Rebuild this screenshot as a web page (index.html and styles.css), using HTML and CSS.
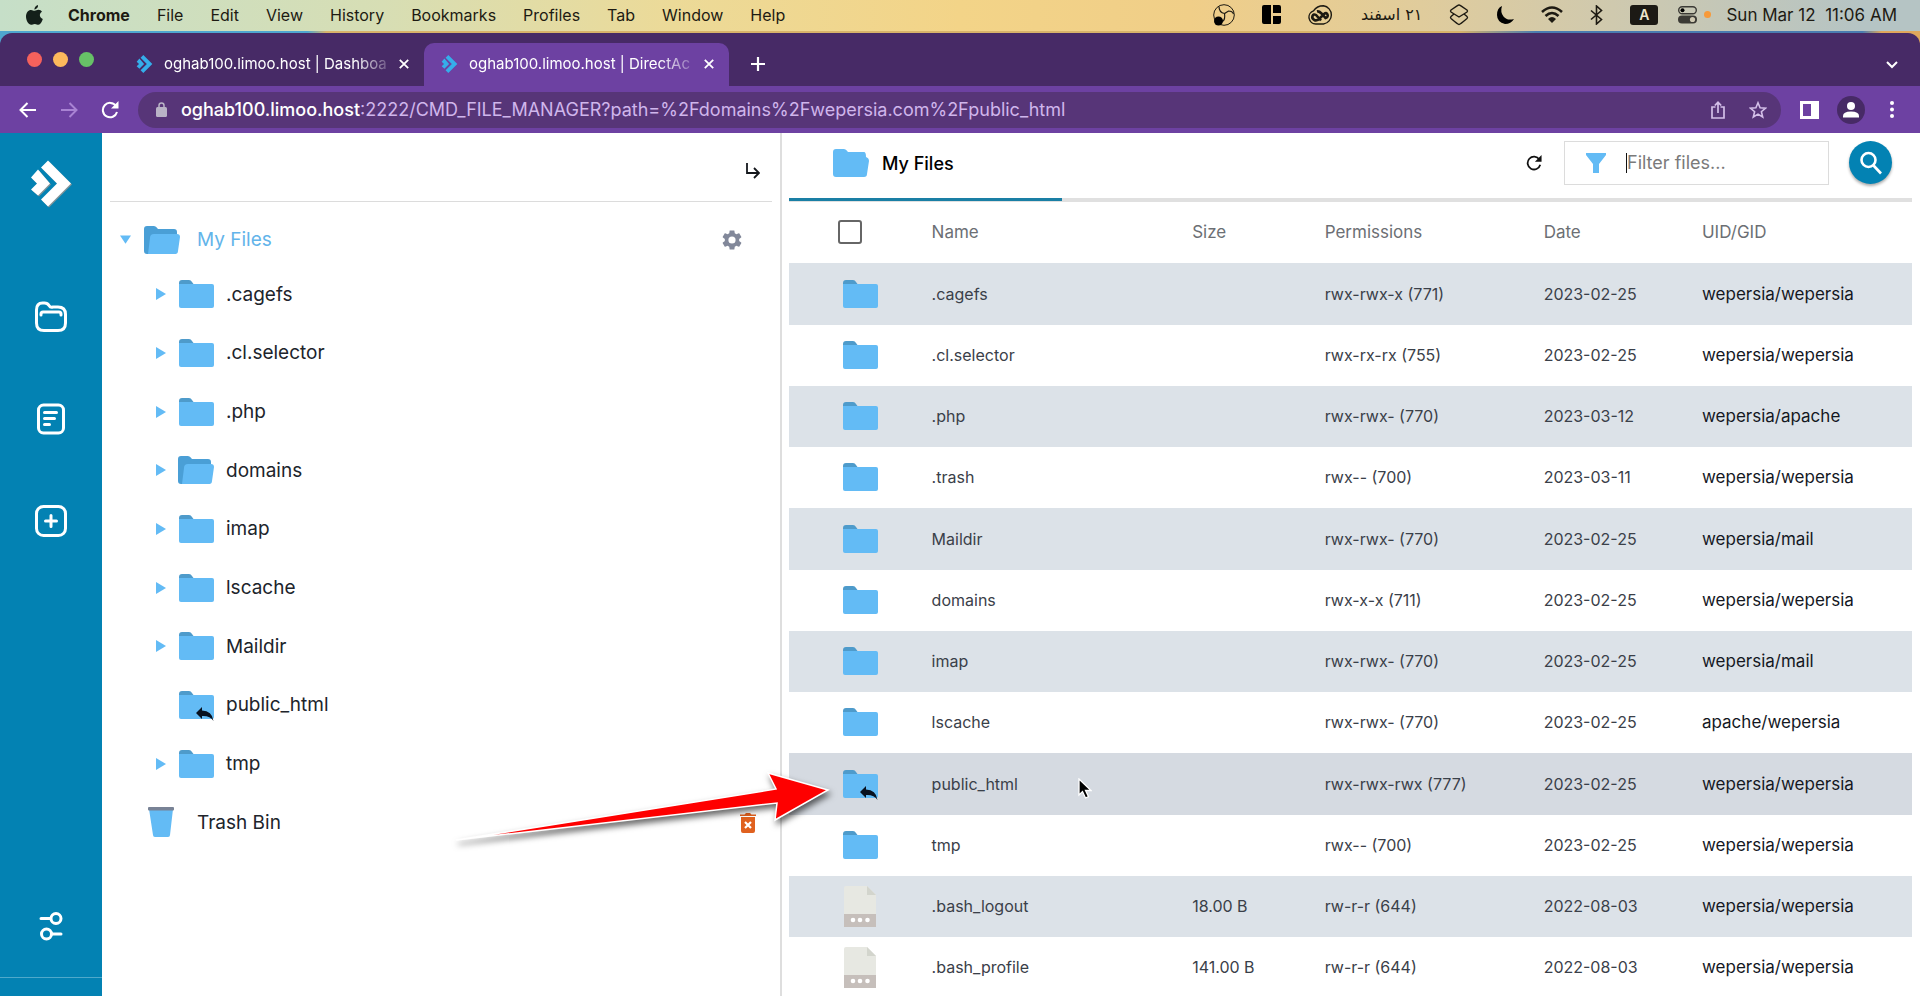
FILE: index.html
```html
<!DOCTYPE html>
<html lang="en">
<head>
<meta charset="utf-8">
<title>oghab100.limoo.host | DirectAdmin</title>
<link rel="stylesheet" href="styles.css">
</head>
<body>
<svg class="sprite" aria-hidden="true">
  <symbol id="folder" viewBox="0 0 36 28"><path d="M1 10V3q0-3 3-3h7q2 0 3 2l3 4v5z" fill="#4e9bcb"/><path d="M1 4h33q2 0 2 2v20q0 2-2 2H3q-2 0-2-2z" fill="#63bbf5"/></symbol>
  <symbol id="folder-open" viewBox="0 0 36 28"><path d="M0 25V3q0-3 3-3h7q2 0 4 3h16q3 0 3 3v19q0 3-3 3H3q-3 0-3-3z" fill="#4a9fd6"/><path d="M6 12q0-4 4-4h23q3 0 3 3l-2 14q0 3-3 3H4z" fill="#63bbf5"/></symbol>
  <symbol id="folder-plain" viewBox="0 0 36 28"><path d="M0 25V3q0-3 3-3h8q2 0 4 3h16q2 0 2 5 3 1 3 4l-2 13q0 3-3 3H3q-3 0-3-3z" fill="#63bbf5"/></symbol>
  <symbol id="link" viewBox="0 0 18 14"><path d="M0 6L6 0V3.500Q16 3.500 17.500 14Q14 8.500 6 9V12z" fill="#08111f"/></symbol>
  <symbol id="right" viewBox="0 0 10 12"><path d="M0 0l10 6-10 6z" fill="#63bbf5"/></symbol>
  <symbol id="doc" viewBox="0 0 32 41"><path d="M0 2q0-2 2-2h21l9 9v20H0z" fill="#e7e8e2"/><path d="M23 0v9h9z" fill="#d3d5cd"/><path d="M0 28h32v13H0z" fill="#c6bfbb"/><g fill="#fff"><circle cx="9" cy="34" r="2.300"/><circle cx="16" cy="34" r="2.300"/><circle cx="23.500" cy="34" r="2.300"/></g></symbol>
  <symbol id="brand" viewBox="0 0 40 46"><path d="M17 0L40 23 17 46 10 39 26 23 10 7z"/><path d="M7 9l12 14L7 35 0 29l6-6-6-6z"/></symbol>
  <symbol id="close" viewBox="0 0 10 10"><path d="M.8.8l8.400 8.400M9.200.8L.8 9.200" stroke="#fff" stroke-width="1.800"/></symbol>
  <symbol id="reload" viewBox="0 0 18 18"><path d="M15 5A7.200 7.200 0 1 0 16 11" fill="none" stroke="currentColor" stroke-width="2"/><path d="M17.500 0v7.500H10z" fill="currentColor"/></symbol>
</svg>

<header class="menubar">
  <nav class="menus">
    <svg class="apple" viewBox="0 0 17 20"><path d="M12 0q.5 3-3.500 4.800Q8 1.500 12 0zM8.500 5.800c1.500 0 2.200-1 4-1 1.500 0 2.800.8 3.500 2-3.200 2-2.700 5.800.8 7.200C15.800 17 14.300 19.800 12.500 19.800c-1.500 0-2-.9-3.700-.9s-2.400.9-3.700.9C2.600 19.800 0 15.500 0 11.500s2.400-6.600 5-6.600c1.500 0 2.500.9 3.500.9z"/></svg>
    <strong>Chrome</strong><span>File</span><span>Edit</span><span>View</span><span>History</span><span>Bookmarks</span><span>Profiles</span><span>Tab</span><span>Window</span><span>Help</span>
  </nav>
  <div class="status">
    <svg width="22" height="22" viewBox="0 0 22 22"><circle cx="11" cy="11" r="10.300" fill="none" stroke="#1d1a12" stroke-width="1"/><path d="M6 2.500q0 6 5.500 7l4-2.500q4 0 5 3M11.500 9.500q1 6-2 8" fill="none" stroke="#1d1a12" stroke-width="1.200"/><circle cx="5.500" cy="17" r="4.500"/></svg>
    <svg width="19" height="19" viewBox="0 0 19 19"><path d="M2 0h7v19H2q-2 0-2-2V2q0-2 2-2zM11 0h6q2 0 2 2v6h-8zM11 11h8v6q0 2-2 2h-6z"/></svg>
    <svg width="26" height="20" viewBox="0 0 26 20"><path d="M8 19A6.800 6.800 0 0 1 5.500 5.800Q9 .8 15.500.8a9.200 9.200 0 0 1 0 18.200z" fill="none" stroke="#1d1a12" stroke-width="1.400"/><path d="M13 15.500l-5-5.500q-2.500-1.500-3.500 1t2 4.200q3 1 5.500-2.200l4-4q2.500-2 3.500.5t-2 3.500l-4-4.500q-2.500-2.500-4.500-2" fill="none" stroke="#1d1a12" stroke-width="2.600"/></svg>
    <span class="fa" lang="fa" dir="rtl">۲۱ اسفند</span>
    <svg width="20" height="22" viewBox="0 0 20 22" fill="none" stroke="#1d1a12" stroke-width="1.400"><path d="M10 1Q11 1 18 6q1 1 0 2l-8 5-8-5q-1-1 0-2 7-5 8-5z"/><path d="M5 10l-3 2.500q-1 1 0 2 7 6 8 6t8-6q1-1 0-2L15 10"/></svg>
    <svg width="18" height="18" viewBox="0 0 18 18"><path d="M6 0Q1 2 1 9t8 9q6 0 9-5-7 2-10.500-2.500T6 0z"/></svg>
    <svg width="22" height="17" viewBox="0 0 22 17" fill="none" stroke="#1d1a12" stroke-width="2.600"><path d="M1 6q10-9 20 0M4.500 10q6.500-6 13 0"/><path d="M7 13q4-4 8 0l-4 4z" fill="#1d1a12" stroke="none"/></svg>
    <svg width="13" height="20" viewBox="0 0 13 20" fill="none" stroke="#1d1a12" stroke-width="1.600"><path d="M1 5.500l10.500 9L6.500 19V1l5 4.500L1 14.500"/></svg>
    <span class="lang">A</span>
    <svg class="toggles" width="19" height="18" viewBox="0 0 19 18"><rect x=".7" y=".7" width="17.600" height="7" rx="3.500" fill="none" stroke="#3b3a35" stroke-width="1.400"/><circle cx="4.500" cy="4.200" r="2"/><rect y="9.500" width="19" height="8" rx="4" fill="#3b3a35"/><circle cx="14.500" cy="13.500" r="2.600" fill="#cfc9b2"/></svg>
    <i class="dot"></i>
    <time>Sun Mar 12&nbsp; 11:06 AM</time>
  </div>
</header>

<div class="window">
  <div class="tabs">
    <div class="lights"><i class="red"></i><i class="amber"></i><i class="green"></i></div>
    <div class="tab"><svg class="fav"><use href="#brand"/></svg><span class="title">oghab100.limoo.host | Dashboa</span><button aria-label="Close tab"><svg class="x"><use href="#close"/></svg></button></div>
    <div class="tab active"><svg class="fav"><use href="#brand"/></svg><span class="title">oghab100.limoo.host | DirectAc</span><button aria-label="Close tab"><svg class="x"><use href="#close"/></svg></button></div>
    <button class="plus" aria-label="New tab"><svg width="14" height="14" viewBox="0 0 14 14"><path d="M7 0v14M0 7h14" stroke="#fff" stroke-width="2.200"/></svg></button>
    <button class="more" aria-label="Search tabs"><svg width="12" height="8" viewBox="0 0 12 8"><path d="M1 1l5 5 5-5" fill="none" stroke="#fff" stroke-width="2"/></svg></button>
  </div>
  <div class="toolbar">
    <button aria-label="Back"><svg width="18" height="16" viewBox="0 0 18 16" fill="none" stroke="#fff" stroke-width="2"><path d="M17 8H2M8.500 1L1.500 8l7 7"/></svg></button>
    <button aria-label="Forward"><svg width="18" height="16" viewBox="0 0 18 16" fill="none" stroke="#a983d3" stroke-width="2"><path d="M1 8h15M9.500 1l7 7-7 7"/></svg></button>
    <button class="white" aria-label="Reload"><svg width="18" height="18"><use href="#reload"/></svg></button>
    <div class="omnibox">
      <svg width="11" height="15" viewBox="0 0 11 15"><path d="M3 7V3.500q0-2.500 2.500-2.500T8 3.500V7" fill="none" stroke="#b9b3c6" stroke-width="1.500"/><rect y="5" width="11" height="10" rx="1.500" fill="#b9b3c6"/></svg>
      <span class="url"><b>oghab100.limoo.host</b>:2222/CMD_FILE_MANAGER?path=%2Fdomains%2Fwepersia.com%2Fpublic_html</span>
      <button aria-label="Share"><svg width="14" height="18" viewBox="0 0 14 18" fill="none" stroke="#d3bfe8" stroke-width="1.700"><path d="M4.500 6H1v11h12V6H9.500M7 12V1.500M3.800 4.500L7 1.300l3.200 3.200"/></svg></button>
      <button aria-label="Bookmark"><svg width="18" height="18" viewBox="0 0 18 18" fill="none" stroke="#d3bfe8" stroke-width="1.600"><path d="M9 1.800l2.100 5 5.400.4-4.100 3.500 1.300 5.300L9 13.100 4.300 16l1.300-5.300-4.100-3.500 5.400-.4z"/></svg></button>
    </div>
    <button aria-label="Side panel"><svg width="19" height="18" viewBox="0 0 19 18"><path fill="#fff" fill-rule="evenodd" d="M0 0h19v18H0zM3 3v12h8V3z"/></svg></button>
    <button class="avatar" aria-label="Profile"><svg width="16" height="16" viewBox="0 0 16 16" fill="#fff"><circle cx="8" cy="4" r="4"/><path d="M0 15.500V14q0-4.500 8-4.500t8 4.500v1.500z"/></svg></button>
    <button aria-label="Menu"><svg width="4" height="17" viewBox="0 0 4 17" fill="#fff"><circle cx="2" cy="2" r="2"/><circle cx="2" cy="8.500" r="2"/><circle cx="2" cy="15" r="2"/></svg></button>
  </div>

  <main class="app">
    <nav class="rail">
      <a class="logo" href="#" aria-label="Home"><svg><use href="#brand"/></svg></a>
      <a href="#" aria-label="Files"><svg width="34" height="34" viewBox="0 0 34 34"><path d="M2.500 10q0-7 6-7h2q3 0 4.500 2.500T19 7h5q7.500 0 7.500 7.500V23q0 7.500-7.500 7.500H10Q2.500 30.500 2.500 23z"/><path d="M7 15v-1q0-2 2-2h16q2 0 2 2v1"/></svg></a>
      <a href="#" aria-label="Notes"><svg width="34" height="34" viewBox="0 0 34 34"><rect x="4.500" y="3" width="25" height="28" rx="5"/><path d="M10.500 10.500h12M10.500 16.500h10M10.500 22.500h5"/></svg></a>
      <a href="#" aria-label="Add"><svg width="34" height="34" viewBox="0 0 34 34"><rect x="2.500" y="2.500" width="29" height="29" rx="7"/><path d="M17 11.500v11M11.500 17h11"/></svg></a>
      <a class="tune" href="#" aria-label="Settings"><svg width="24" height="30" viewBox="0 0 24 30"><circle cx="17" cy="7.500" r="5"/><path d="M2 7.500h9M22 23h-9"/><circle cx="7.500" cy="23" r="5"/></svg></a>
    </nav>

    <section class="tree">
      <div class="treetop"><button aria-label="Collapse"><svg width="14" height="16" viewBox="0 0 14 16" fill="none" stroke="#14171c" stroke-width="1.800"><path d="M1 0v10h12M8 5l5 5-5 5"/></svg></button></div>
      <div class="node root"><svg class="down" viewBox="0 0 12 9"><path d="M0 0h12L6 9z" fill="#63bbf5"/></svg><svg class="fi"><use href="#folder-open"/></svg><a href="#">My Files</a>
        <button aria-label="Settings"><svg width="20" height="20" viewBox="2 2 20 20"><path fill="#82889a" d="M19.140 12.940c.04-.3.060-.61.060-.94 0-.32-.02-.64-.07-.94l2.030-1.580c.18-.14.230-.41.120-.61l-1.920-3.320c-.12-.22-.37-.29-.59-.22l-2.390.96c-.5-.38-1.030-.7-1.620-.94l-.36-2.540c-.04-.24-.24-.41-.48-.41h-3.840c-.24 0-.43.170-.47.410l-.36 2.540c-.59.240-1.130.570-1.620.940l-2.390-.96c-.22-.08-.47 0-.59.220L2.740 8.870c-.12.210-.08.470.120.610l2.030 1.580c-.05.300-.09.630-.09.940s.02.640.070.940l-2.030 1.580c-.18.140-.23.410-.12.610l1.920 3.320c.12.220.370.290.590.220l2.390-.96c.500.380 1.030.700 1.620.940l.36 2.540c.05.240.240.410.480.410h3.840c.24 0 .44-.17.470-.41l.36-2.540c.59-.24 1.130-.56 1.620-.94l2.390.96c.22.080.470 0 .59-.22l1.920-3.320c.12-.22.070-.47-.12-.61zM12 15.600A3.600 3.600 0 1 1 12 8.400a3.600 3.600 0 0 1 0 7.200z"/></svg></button></div>
      <div class="nodes">
        <div class="node"><svg class="right"><use href="#right"/></svg><svg class="fi"><use href="#folder"/></svg><a href="#">.cagefs</a></div>
        <div class="node"><svg class="right"><use href="#right"/></svg><svg class="fi"><use href="#folder"/></svg><a href="#">.cl.selector</a></div>
        <div class="node"><svg class="right"><use href="#right"/></svg><svg class="fi"><use href="#folder"/></svg><a href="#">.php</a></div>
        <div class="node"><svg class="right"><use href="#right"/></svg><svg class="fi"><use href="#folder-open"/></svg><a href="#">domains</a></div>
        <div class="node"><svg class="right"><use href="#right"/></svg><svg class="fi"><use href="#folder"/></svg><a href="#">imap</a></div>
        <div class="node"><svg class="right"><use href="#right"/></svg><svg class="fi"><use href="#folder"/></svg><a href="#">lscache</a></div>
        <div class="node"><svg class="right"><use href="#right"/></svg><svg class="fi"><use href="#folder"/></svg><a href="#">Maildir</a></div>
        <div class="node"><svg class="right"></svg><span class="linked"><svg class="fi"><use href="#folder"/></svg><svg class="badge"><use href="#link"/></svg></span><a href="#">public_html</a></div>
        <div class="node"><svg class="right"><use href="#right"/></svg><svg class="fi"><use href="#folder"/></svg><a href="#">tmp</a></div>
      </div>
      <div class="node bin"><svg width="28" height="31" viewBox="0 0 28 31"><path d="M2 2h24l-3 26q0 2-2 2H8q-2 0-2-2z" fill="#63bbf5"/><rect x="1" width="26" height="3.500" rx="1" fill="#788295"/></svg><a href="#">Trash Bin</a>
        <button aria-label="Empty trash"><svg width="16" height="20" viewBox="0 0 16 20"><path d="M0 1.500h4.500L6 0h4l1.500 1.500H16V3H0zM1 4h14v14q0 2-2 2H3q-2 0-2-2z" fill="#e0611f"/><path d="M5 9l6 6M11 9l-6 6" stroke="#fff" stroke-width="2.200"/></svg></button></div>
    </section>

    <section class="files">
      <div class="filetop">
        <h1><svg class="fi"><use href="#folder-plain"/></svg>My Files</h1>
        <button class="refresh" aria-label="Refresh"><svg width="16" height="16" viewBox="0 0 18 18"><use href="#reload"/></svg></button>
        <label class="filter"><svg width="20" height="20" viewBox="0 0 20 20"><path d="M0 0h20v2l-7 9v9H7v-9L0 2z" fill="#63bbf5"/></svg><i class="caret"></i><input type="text" placeholder="Filter files..." aria-label="Filter files"></label>
        <button class="search" aria-label="Search"><svg width="24" height="24" viewBox="0 0 24 24" fill="none" stroke="#fff" stroke-width="2.600"><circle cx="9.500" cy="9" r="7"/><path d="M14.500 14.500l7.500 8"/></svg></button>
      </div>
      <table>
        <colgroup><col class="c1"><col class="c2"><col class="c3"><col class="c4"><col class="c5"><col class="c6"></colgroup>
        <thead><tr><th><input type="checkbox" aria-label="Select all"></th><th>Name</th><th>Size</th><th>Permissions</th><th>Date</th><th>UID/GID</th></tr></thead>
        <tbody>
          <tr><td><svg class="fi"><use href="#folder"/></svg></td><td>.cagefs</td><td></td><td>rwx-rwx-x (771)</td><td>2023-02-25</td><td>wepersia/wepersia</td></tr>
          <tr><td><svg class="fi"><use href="#folder"/></svg></td><td>.cl.selector</td><td></td><td>rwx-rx-rx (755)</td><td>2023-02-25</td><td>wepersia/wepersia</td></tr>
          <tr><td><svg class="fi"><use href="#folder"/></svg></td><td>.php</td><td></td><td>rwx-rwx- (770)</td><td>2023-03-12</td><td>wepersia/apache</td></tr>
          <tr><td><svg class="fi"><use href="#folder"/></svg></td><td>.trash</td><td></td><td>rwx-- (700)</td><td>2023-03-11</td><td>wepersia/wepersia</td></tr>
          <tr><td><svg class="fi"><use href="#folder"/></svg></td><td>Maildir</td><td></td><td>rwx-rwx- (770)</td><td>2023-02-25</td><td>wepersia/mail</td></tr>
          <tr><td><svg class="fi"><use href="#folder"/></svg></td><td>domains</td><td></td><td>rwx-x-x (711)</td><td>2023-02-25</td><td>wepersia/wepersia</td></tr>
          <tr><td><svg class="fi"><use href="#folder"/></svg></td><td>imap</td><td></td><td>rwx-rwx- (770)</td><td>2023-02-25</td><td>wepersia/mail</td></tr>
          <tr><td><svg class="fi"><use href="#folder"/></svg></td><td>lscache</td><td></td><td>rwx-rwx- (770)</td><td>2023-02-25</td><td>apache/wepersia</td></tr>
          <tr class="hover"><td><span class="linked"><svg class="fi"><use href="#folder"/></svg><svg class="badge"><use href="#link"/></svg></span></td><td>public_html</td><td></td><td>rwx-rwx-rwx (777)</td><td>2023-02-25</td><td>wepersia/wepersia</td></tr>
          <tr><td><svg class="fi"><use href="#folder"/></svg></td><td>tmp</td><td></td><td>rwx-- (700)</td><td>2023-02-25</td><td>wepersia/wepersia</td></tr>
          <tr><td><svg class="doc"><use href="#doc"/></svg></td><td>.bash_logout</td><td>18.00 B</td><td>rw-r-r (644)</td><td>2022-08-03</td><td>wepersia/wepersia</td></tr>
          <tr><td><svg class="doc"><use href="#doc"/></svg></td><td>.bash_profile</td><td>141.00 B</td><td>rw-r-r (644)</td><td>2022-08-03</td><td>wepersia/wepersia</td></tr>
        </tbody>
      </table>
    </section>
  </main>
</div>

<svg class="arrow" viewBox="0 0 390 90" aria-hidden="true"><path d="M6 70L326 19 318 3 378 20 325 50 327 33z" fill="#fe0000" stroke="#fff" stroke-width="1.500"/></svg>
<svg class="cursor" viewBox="0 0 14 21" aria-hidden="true"><path d="M1 1v16l3.500-3.500L7.500 20l3-1.300-3-6.200H13z" fill="#000" stroke="#fff" stroke-width="1.300"/></svg>
</body>
</html>
```

FILE: styles.css
```css
* { box-sizing: border-box; }
body {
  margin: 0;
  height: 100vh;
  overflow: hidden;
  display: flex;
  flex-direction: column;
  font-family: Inter, "Noto Sans", sans-serif;
  color: #20242b;
  background: linear-gradient(90deg, #4fa6cf 0 16%, #d8b36a 17% 76%, #4a7cb0 80% 97%, #e0a75c 98%);
}
svg { display: block; flex: none; }
button { border: 0; padding: 0; background: none; display: flex; flex: none; align-items: center; justify-content: center; color: inherit; }
a { color: inherit; text-decoration: none; }
.sprite { position: absolute; width: 0; height: 0; }

.menubar {
  flex: none;
  height: 31px;
  margin-bottom: 2px;
  display: flex;
  justify-content: space-between;
  align-items: center;
  padding: 0 23px 2px 26px;
  font-size: 16px;
  color: #1d1a12;
  background: linear-gradient(90deg, #c6dfc8 0%, #d7deb4 20%, #ecda98 35%, #f3d488 50%, #f0ce88 62%, #e0cc9c 74%, #cfc9ae 84%, #b5c4c4 97%);
}
.menus { display: flex; align-items: center; gap: 27px; }
.apple { width: 17px; height: 20px; fill: #14201a; margin-right: -2px; }
.menus strong { font-weight: 700; }
.status { display: flex; align-items: center; gap: 27px; }
.status time { font-size: 17px; }
.fa { font-family: "DejaVu Sans", sans-serif; font-size: 16px; }
.lang { width: 28px; height: 20px; border-radius: 3px; background: #1c1a15; color: #efe6cc; font-size: 14px; font-weight: 600; line-height: 20px; text-align: center; }
.toggles { margin-left: -7px; }
.dot { width: 7px; height: 7px; border-radius: 50%; background: #f79a3a; margin: 0 -12px 0 -20px; }

.window { flex: 1; min-height: 0; display: flex; flex-direction: column; border-radius: 12px 12px 0 0; overflow: hidden; background: #472a66; }
.tabs { flex: none; height: 53px; display: flex; align-items: flex-end; padding: 0 22px 0 27px; color: #fff; }
.lights { display: flex; gap: 11px; align-self: center; margin-right: 25px; }
.lights i { width: 15px; height: 15px; border-radius: 50%; }
.red { background: #f5615c; }
.amber { background: #fdb95c; }
.green { background: #67c167; }
.tab { width: 305px; height: 43px; display: flex; align-items: center; gap: 11px; padding: 0 15px 2px 17px; font-size: 15px; }
.tab.active { background: #6d41a2; border-radius: 10px 10px 0 0; }
.fav { width: 17px; height: 18px; fill: #35aeea; }
.title { flex: 1; min-width: 0; white-space: nowrap; -webkit-mask-image: linear-gradient(90deg, #000 85%, #0003); mask-image: linear-gradient(90deg, #000 85%, #0003); }
.x { width: 10px; height: 10px; }
.plus { height: 43px; margin-left: 22px; padding-bottom: 2px; }
.more { height: 43px; margin-left: auto; }

.toolbar { flex: none; height: 47px; display: flex; align-items: center; gap: 23px; padding: 0 26px 0 19px; background: #6d41a2; }
.white { color: #fff; }
.omnibox { flex: 1; min-width: 0; height: 36px; border-radius: 18px; margin: 0 -4px; padding: 0 14px 0 18px; display: flex; align-items: center; gap: 24px; background: #573578; color: #d0b6ec; font-size: 18px; }
.url { flex: 1; min-width: 0; margin-left: -10px; padding-bottom: 1px; white-space: nowrap; overflow: hidden; }
.url b { color: #fff; font-weight: 500; }
.avatar { width: 28px; height: 28px; border-radius: 50%; background: #472a66; margin: 0 2px 0 -5px; }

.app { flex: 1; min-height: 0; display: flex; background: #fff; }
.rail { flex: none; width: 102px; display: flex; flex-direction: column; align-items: center; gap: 68px; padding-top: 27px; background: #0382b3; }
.rail svg { fill: none; stroke: #fff; stroke-width: 3; stroke-linecap: round; }
.rail .logo { margin-bottom: 25px; }
.rail .logo svg { width: 40px; height: 47px; fill: #fff; stroke: none; filter: drop-shadow(1px 1px 0 #7f9298); }
.rail .tune { width: 100%; display: flex; justify-content: center; margin-top: auto; padding-bottom: 36px; margin-bottom: 18px; border-bottom: 1px solid #4fa9cb; }

.tree { flex: 0 1 680px; border-right: 2px solid #dedede; padding: 0 8px; font-size: 19px; }
.treetop { height: 69px; border-bottom: 1px solid #dcdcdc; display: flex; justify-content: flex-end; align-items: center; padding: 8px 12px 0 0; }
.node { display: flex; align-items: center; }
.node button { margin-left: auto; }
.fi { width: 36px; height: 28px; }
.root { height: 75px; padding: 0 30px 0 10px; color: #63b4ea; }
.down { width: 11px; height: 9px; margin-right: 13px; }
.root a { margin-left: 17px; }
.nodes { display: grid; grid-auto-rows: 1fr; min-height: 528px; margin-top: -12px; padding-left: 46px; }
.right { width: 10px; height: 12px; margin-right: 12px; }
.nodes a { margin-left: 12px; }
.linked { position: relative; display: block; width: 36px; }
.badge { position: absolute; right: 0; bottom: -2px; width: 18px; height: 14px; }
.bin { height: 59px; padding: 0 16px 0 37px; }
.bin a { margin-left: 22px; }

.files { flex: 1 1 1138px; min-width: 0; padding: 0 8px 0 7px; }
.filetop { height: 69px; display: flex; align-items: center; padding: 0 20px 6px 0; border-bottom: 4px solid #e0e0e0; }
.files h1 { align-self: flex-start; width: 273px; height: 68px; flex: none; display: flex; align-items: center; gap: 13px; margin: 0; padding: 0 0 5px 44px; border-bottom: 3px solid #1a7fa5; font-size: 18px; font-weight: 500; color: #000; }
.refresh { margin-left: auto; color: #111; }
.filter { width: 265px; height: 44px; display: flex; align-items: center; margin: 0 20px 0 22px; padding-left: 21px; border: 1px solid #dcdcdc; }
.caret { width: 1px; height: 20px; background: #111; margin-left: 20px; }
.filter input { flex: 1; min-width: 0; border: 0; outline: 0; padding: 0; font: inherit; font-size: 18px; }
.filter input::placeholder { color: #7a7a7a; }
.search { width: 43px; height: 43px; border-radius: 50%; background: #0382b3; box-shadow: 0 2px 3px #0005; }

table { width: 100%; table-layout: fixed; border-collapse: collapse; font-size: 16px; color: #3a4049; }
.c1 { width: 12.7%; }
.c2 { width: 23.2%; }
.c3 { width: 11.8%; }
.c4 { width: 19.5%; }
.c5 { width: 14.1%; }
.c6 { width: 18.7%; }
th, td { padding: 0 0 1px; text-align: left; font-weight: 400; }
thead tr { height: 61px; }
th { color: #6c6f74; font-size: 17px; padding-bottom: 2px; }
tbody tr { height: 61px; }
tbody tr:nth-child(4n+1) { height: 62px; }
tbody tr:nth-child(odd) { background: #dce2e8; }
tbody tr.hover { background: #d5dae1; }
td:first-child { padding-left: 53px; }
td:last-child { font-size: 17px; color: #14181f; }
.doc { width: 32px; height: 41px; margin-left: 2px; }
th input { appearance: none; display: block; width: 24px; height: 24px; margin: 0 0 0 49px; border: 2px solid #666; border-radius: 3px; }

.arrow { position: absolute; left: 450px; top: 770px; width: 390px; height: 90px; filter: drop-shadow(2px 4px 3px #0009); }
.cursor { position: absolute; left: 1078px; top: 778px; width: 14px; height: 21px; }
```
